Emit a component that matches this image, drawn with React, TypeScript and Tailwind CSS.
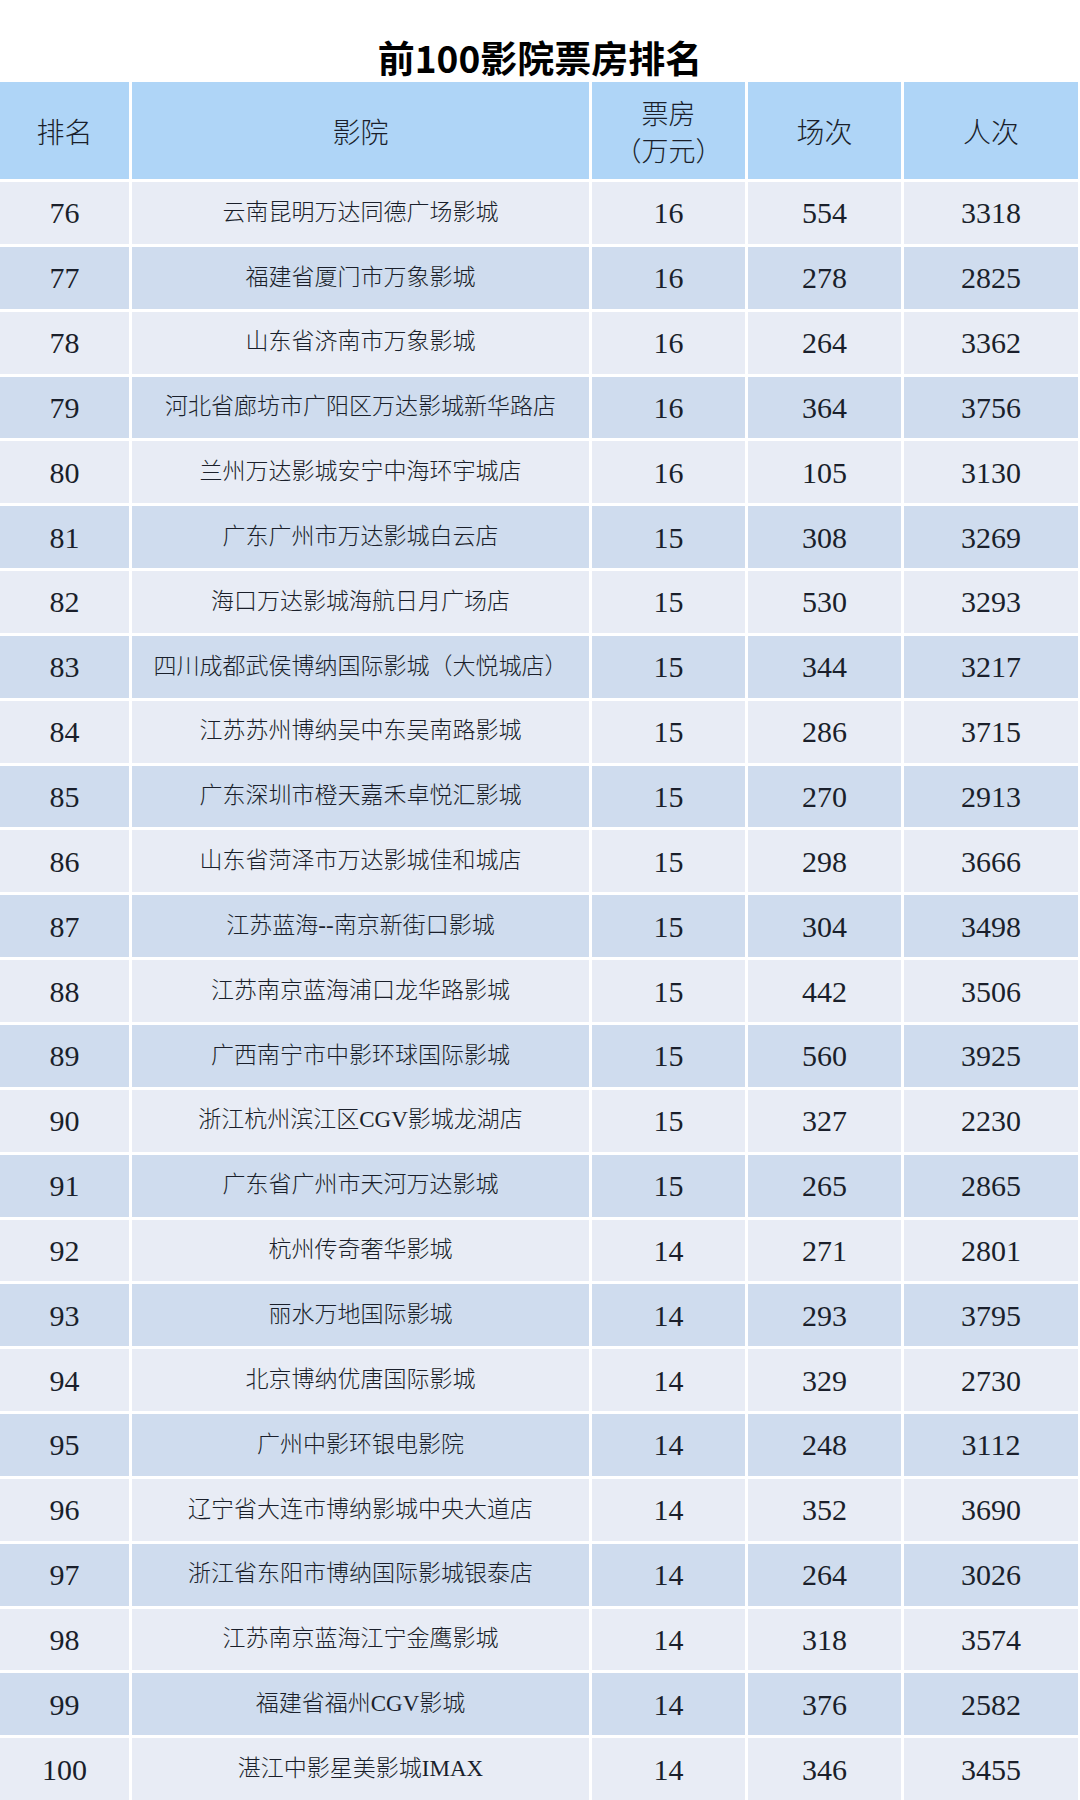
import React from "react";

const rows: [string, string, string, string, string][] = [
  ["76", "云南昆明万达同德广场影城", "16", "554", "3318"],
  ["77", "福建省厦门市万象影城", "16", "278", "2825"],
  ["78", "山东省济南市万象影城", "16", "264", "3362"],
  ["79", "河北省廊坊市广阳区万达影城新华路店", "16", "364", "3756"],
  ["80", "兰州万达影城安宁中海环宇城店", "16", "105", "3130"],
  ["81", "广东广州市万达影城白云店", "15", "308", "3269"],
  ["82", "海口万达影城海航日月广场店", "15", "530", "3293"],
  ["83", "四川成都武侯博纳国际影城（大悦城店）", "15", "344", "3217"],
  ["84", "江苏苏州博纳吴中东吴南路影城", "15", "286", "3715"],
  ["85", "广东深圳市橙天嘉禾卓悦汇影城", "15", "270", "2913"],
  ["86", "山东省菏泽市万达影城佳和城店", "15", "298", "3666"],
  ["87", "江苏蓝海--南京新街口影城", "15", "304", "3498"],
  ["88", "江苏南京蓝海浦口龙华路影城", "15", "442", "3506"],
  ["89", "广西南宁市中影环球国际影城", "15", "560", "3925"],
  ["90", "浙江杭州滨江区CGV影城龙湖店", "15", "327", "2230"],
  ["91", "广东省广州市天河万达影城", "15", "265", "2865"],
  ["92", "杭州传奇奢华影城", "14", "271", "2801"],
  ["93", "丽水万地国际影城", "14", "293", "3795"],
  ["94", "北京博纳优唐国际影城", "14", "329", "2730"],
  ["95", "广州中影环银电影院", "14", "248", "3112"],
  ["96", "辽宁省大连市博纳影城中央大道店", "14", "352", "3690"],
  ["97", "浙江省东阳市博纳国际影城银泰店", "14", "264", "3026"],
  ["98", "江苏南京蓝海江宁金鹰影城", "14", "318", "3574"],
  ["99", "福建省福州CGV影城", "14", "376", "2582"],
  ["100", "湛江中影星美影城IMAX", "14", "346", "3455"],
];

const serif = "font-['Liberation_Serif','Noto_Sans_CJK_SC',serif]";

export default function App() {
  return (
    <div className="w-[1080px] h-[1800px] overflow-hidden bg-white">
      <div className="h-[82px] pt-[39px] text-center">
        <h1 className="text-[37px] leading-none font-bold text-black font-['Noto_Sans_CJK_SC','Noto_Sans',sans-serif]">
          前100影院票房排名
        </h1>
      </div>
      <div
        className={`grid grid-cols-[129px_457px_153px_153px_174px] gap-[3px] text-[#1a1f2b] ${serif}`}
      >
        <div className="h-[97px] bg-[#afd5f7] flex items-center justify-center text-[28px] font-['Noto_Sans_CJK_SC',sans-serif] font-light">
          排名
        </div>
        <div className="h-[97px] bg-[#afd5f7] flex items-center justify-center text-[28px] font-['Noto_Sans_CJK_SC',sans-serif] font-light">
          影院
        </div>
        <div className="h-[97px] bg-[#afd5f7] flex flex-col items-center justify-center text-[27px] leading-[37px] font-['Noto_Sans_CJK_SC',sans-serif] font-light">
          <span>票房</span>
          <span>（万元）</span>
        </div>
        <div className="h-[97px] bg-[#afd5f7] flex items-center justify-center text-[28px] font-['Noto_Sans_CJK_SC',sans-serif] font-light">
          场次
        </div>
        <div className="h-[97px] bg-[#afd5f7] flex items-center justify-center text-[28px] font-['Noto_Sans_CJK_SC',sans-serif] font-light">
          人次
        </div>
        {rows.map((r, i) => {
          const bg = i % 2 === 0 ? "bg-[#e8ecf5]" : "bg-[#cfdcee]";
          return (
            <React.Fragment key={r[0]}>
              <div className={`h-[61.85px] ${bg} flex items-center justify-center text-[30px]`}>{r[0]}</div>
              <div className={`h-[61.85px] ${bg} flex items-center justify-center text-[23px] font-light`}>{r[1]}</div>
              <div className={`h-[61.85px] ${bg} flex items-center justify-center text-[30px]`}>{r[2]}</div>
              <div className={`h-[61.85px] ${bg} flex items-center justify-center text-[30px]`}>{r[3]}</div>
              <div className={`h-[61.85px] ${bg} flex items-center justify-center text-[30px]`}>{r[4]}</div>
            </React.Fragment>
          );
        })}
      </div>
    </div>
  );
}
